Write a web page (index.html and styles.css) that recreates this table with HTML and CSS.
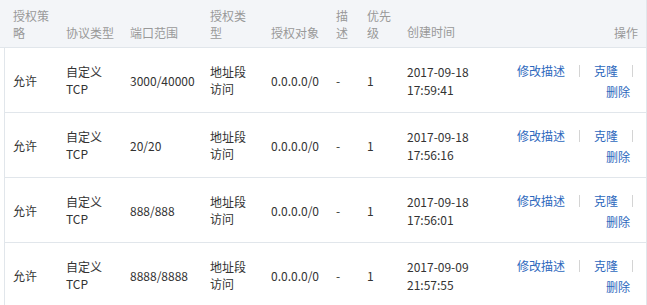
FILE: index.html
```html
<!DOCTYPE html>
<html lang="zh-CN">
<head>
<meta charset="utf-8">
<link rel="stylesheet" href="styles.css">
</head>
<body>
<div class="table">
  <div class="thead">
    <div class="row head-row">
      <div class="cell c1">授权策略</div>
      <div class="cell c2">协议类型</div>
      <div class="cell c3">端口范围</div>
      <div class="cell c4">授权类型</div>
      <div class="cell c5">授权对象</div>
      <div class="cell c6">描述</div>
      <div class="cell c7">优先级</div>
      <div class="cell c8">创建时间</div>
      <div class="cell c9">操作</div>
    </div>
  </div>
  <div class="tbody">
    <div class="row body-row">
      <div class="cell c1">允许</div>
      <div class="cell c2">自定义<br>TCP</div>
      <div class="cell c3">3000/40000</div>
      <div class="cell c4">地址段<br>访问</div>
      <div class="cell c5">0.0.0.0/0</div>
      <div class="cell c6">-</div>
      <div class="cell c7">1</div>
      <div class="cell c8">2017-09-18<br>17:59:41</div>
      <div class="cell c9 actions">
        <div class="line"><a class="link">修改描述</a><span class="sep"></span><a class="link">克隆</a><span class="sep"></span></div>
        <div class="line line2"><a class="link">删除</a></div>
      </div>
    </div>
    <div class="row body-row">
      <div class="cell c1">允许</div>
      <div class="cell c2">自定义<br>TCP</div>
      <div class="cell c3">20/20</div>
      <div class="cell c4">地址段<br>访问</div>
      <div class="cell c5">0.0.0.0/0</div>
      <div class="cell c6">-</div>
      <div class="cell c7">1</div>
      <div class="cell c8">2017-09-18<br>17:56:16</div>
      <div class="cell c9 actions">
        <div class="line"><a class="link">修改描述</a><span class="sep"></span><a class="link">克隆</a><span class="sep"></span></div>
        <div class="line line2"><a class="link">删除</a></div>
      </div>
    </div>
    <div class="row body-row">
      <div class="cell c1">允许</div>
      <div class="cell c2">自定义<br>TCP</div>
      <div class="cell c3">888/888</div>
      <div class="cell c4">地址段<br>访问</div>
      <div class="cell c5">0.0.0.0/0</div>
      <div class="cell c6">-</div>
      <div class="cell c7">1</div>
      <div class="cell c8">2017-09-18<br>17:56:01</div>
      <div class="cell c9 actions">
        <div class="line"><a class="link">修改描述</a><span class="sep"></span><a class="link">克隆</a><span class="sep"></span></div>
        <div class="line line2"><a class="link">删除</a></div>
      </div>
    </div>
    <div class="row body-row">
      <div class="cell c1">允许</div>
      <div class="cell c2">自定义<br>TCP</div>
      <div class="cell c3">8888/8888</div>
      <div class="cell c4">地址段<br>访问</div>
      <div class="cell c5">0.0.0.0/0</div>
      <div class="cell c6">-</div>
      <div class="cell c7">1</div>
      <div class="cell c8">2017-09-09<br>21:57:55</div>
      <div class="cell c9 actions">
        <div class="line"><a class="link">修改描述</a><span class="sep"></span><a class="link">克隆</a><span class="sep"></span></div>
        <div class="line line2"><a class="link">删除</a></div>
      </div>
    </div>
  </div>
</div>
</body>
</html>
```

FILE: styles.css
```css
html, body {
  margin: 0;
  padding: 0;
  background: #fff;
}
body {
  width: 647px;
  height: 305px;
  overflow: hidden;
  font-family: "Noto Sans CJK SC", "Noto Sans", sans-serif;
  font-size: 12px;
  color: #333;
}
.table {
  width: 646px;
  border-right: 1px solid #e1e6eb;
}
.thead {
  background: #f3f5f8;
  border-bottom: 1px solid #e1e6eb;
  padding-left: 5px;
}
.tbody {
  margin-left: 4px;
  border-left: 1px solid #e1e6eb;
}
.row {
  display: grid;
  grid-template-columns: 53px 64px 80px 61px 65px 31px 40px 110px 1fr;
}
.head-row {
  height: 47px;
  color: #999;
}
.head-row .cell {
  align-self: end;
  padding-bottom: 6px;
}
.body-row {
  height: 64px;
  border-bottom: 1px solid #e1e6eb;
}
.body-row .cell {
  align-self: center;
}
.cell {
  padding: 0 8px;
  line-height: 17px;
  min-width: 0;
}
.c8 {
  line-height: 18px;
  padding-top: 1px;
}
.c9 {
  text-align: right;
}
.actions {
  padding-right: 13px;
  padding-top: 3px;
}
.line {
  line-height: 20px;
  display: flex;
  justify-content: flex-end;
  align-items: center;
  white-space: nowrap;
}
.line2 {
  margin-right: 3px;
  margin-top: 1px;
}
.link {
  color: #2d68bd;
  cursor: pointer;
  flex-shrink: 0;
  white-space: nowrap;
}
.sep {
  display: inline-block;
  flex-shrink: 0;
  width: 1px;
  height: 12px;
  background: #d4d4d4;
  margin: 0 14px;
}
.line .sep:last-child {
  margin-right: 0;
}
```
